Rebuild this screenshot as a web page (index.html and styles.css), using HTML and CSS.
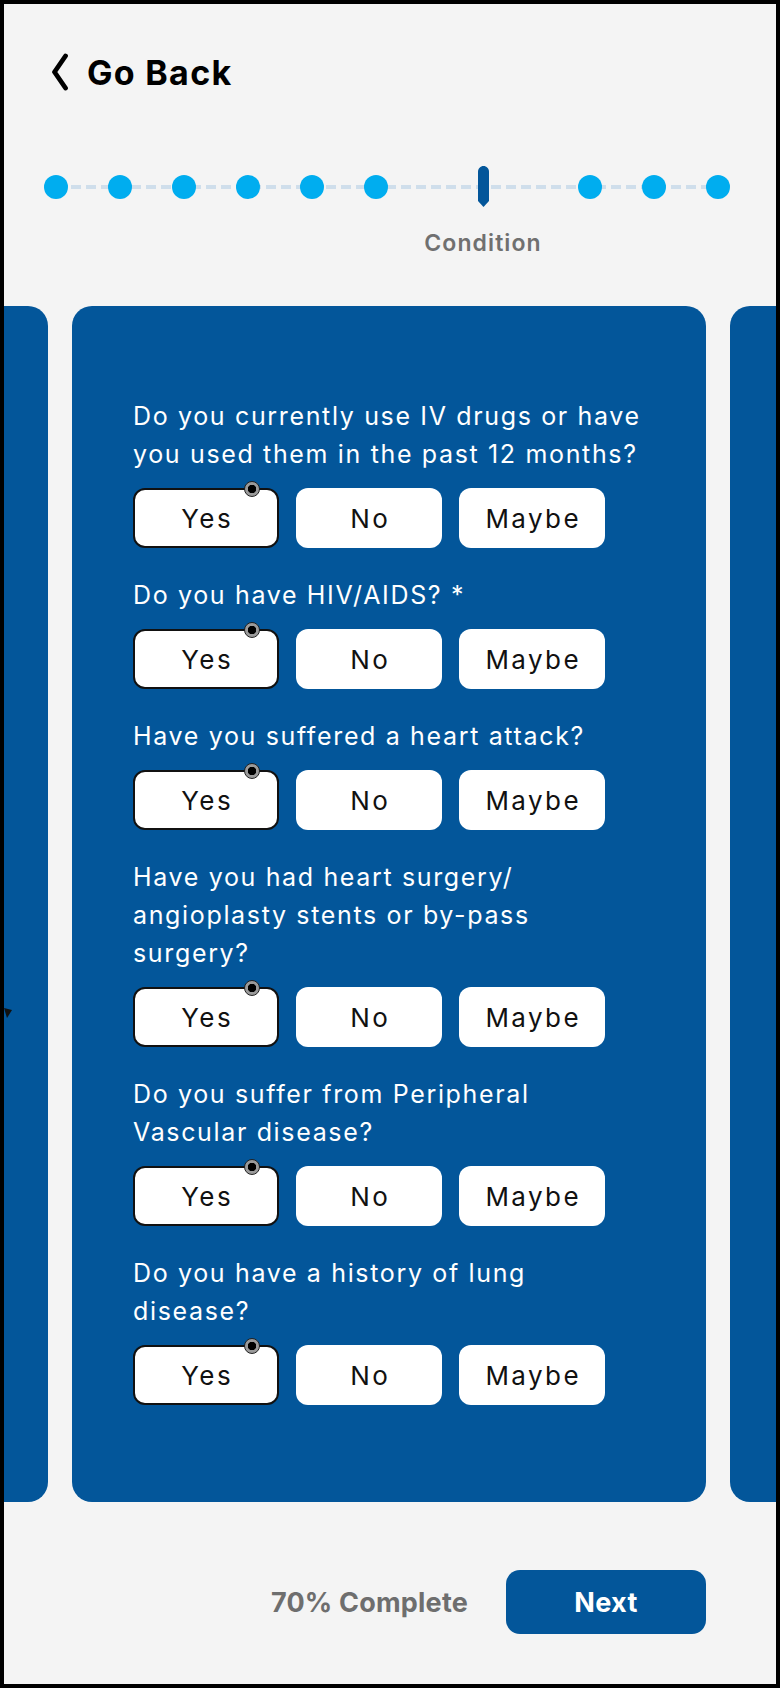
FILE: index.html
```html
<!DOCTYPE html>
<html lang="en">
<head>
<meta charset="utf-8">
<title>Condition</title>
<link rel="stylesheet" href="styles.css">
</head>
<body>
<div class="screen">
  <header class="header">
    <a class="back" href="#">
      <svg class="back-icon" width="20" height="38" viewBox="0 0 20 38"><path d="M15.5 3 L4.5 19 L15.5 35" fill="none" stroke="#000" stroke-width="4.8" stroke-linecap="round" stroke-linejoin="round"/></svg>
      <span>Go Back</span>
    </a>
  </header>

  <nav class="stepper">
    <span class="dot"></span>
    <span class="dot"></span>
    <span class="dot"></span>
    <span class="dot"></span>
    <span class="dot"></span>
    <span class="dot"></span>
    <span class="step-active">
      <svg class="marker" width="11" height="41" viewBox="0 0 11 41"><path d="M5.5 0 C8.5 0 11 2.5 11 5.5 L11 35 L5.5 41 L0 35 L0 5.5 C0 2.5 2.5 0 5.5 0 Z" fill="#03569a"/></svg>
      <span class="step-label">Condition</span>
    </span>
    <span class="dot"></span>
    <span class="dot"></span>
    <span class="dot"></span>
  </nav>

  <div class="carousel">
    <div class="track">
      <section class="card card-side">
        <svg class="side-mark" width="8" height="10" viewBox="0 0 8 10"><path d="M0 0 L8 2 L3 10 Z" fill="#111"/></svg>
      </section>
      <section class="card">
        <div class="q">
          <p class="q-text">Do you currently use IV drugs or have<br>you used them in the past 12 months?</p>
          <div class="options">
            <button class="opt opt-selected">Yes<span class="pin"></span></button>
            <button class="opt">No</button>
            <button class="opt">Maybe</button>
          </div>
        </div>
        <div class="q">
          <p class="q-text">Do you have HIV/AIDS? *</p>
          <div class="options">
            <button class="opt opt-selected">Yes<span class="pin"></span></button>
            <button class="opt">No</button>
            <button class="opt">Maybe</button>
          </div>
        </div>
        <div class="q">
          <p class="q-text">Have you suffered a heart attack?</p>
          <div class="options">
            <button class="opt opt-selected">Yes<span class="pin"></span></button>
            <button class="opt">No</button>
            <button class="opt">Maybe</button>
          </div>
        </div>
        <div class="q">
          <p class="q-text">Have you had heart surgery/<br>angioplasty stents or by-pass<br>surgery?</p>
          <div class="options">
            <button class="opt opt-selected">Yes<span class="pin"></span></button>
            <button class="opt">No</button>
            <button class="opt">Maybe</button>
          </div>
        </div>
        <div class="q">
          <p class="q-text">Do you suffer from Peripheral<br>Vascular disease?</p>
          <div class="options">
            <button class="opt opt-selected">Yes<span class="pin"></span></button>
            <button class="opt">No</button>
            <button class="opt">Maybe</button>
          </div>
        </div>
        <div class="q">
          <p class="q-text">Do you have a history of lung<br>disease?</p>
          <div class="options">
            <button class="opt opt-selected">Yes<span class="pin"></span></button>
            <button class="opt">No</button>
            <button class="opt">Maybe</button>
          </div>
        </div>
      </section>
      <section class="card card-side"></section>
    </div>
  </div>

  <footer class="footer">
    <span class="progress">70% Complete</span>
    <button class="next">Next</button>
  </footer>
</div>
</body>
</html>
```

FILE: styles.css
```css
* { box-sizing: border-box; }

html, body {
  margin: 0;
  padding: 0;
  background: #000;
}

.screen {
  width: 780px;
  height: 1688px;
  border: 4px solid #000;
  background: #f4f4f4;
  overflow: hidden;
  display: flex;
  flex-direction: column;
  font-family: "Inter", "Liberation Sans", sans-serif;
}

/* header */
.header {
  padding: 48px 0 0 46px;
  height: 92px;
}

.back {
  display: inline-flex;
  align-items: center;
  gap: 17px;
  height: 40px;
  color: #000;
  text-decoration: none;
  font-weight: 700;
  font-size: 34px;
  letter-spacing: 1.3px;
}

.back-icon { display: block; }

/* stepper */
.stepper {
  position: relative;
  display: flex;
  align-items: flex-start;
  gap: 40px;
  margin-top: 70px;
  padding-left: 40px;
  height: 140px;
}

.stepper::before {
  content: "";
  position: absolute;
  left: 52px;
  width: 662px;
  top: 18.5px;
  height: 4px;
  border-radius: 2px;
  background: repeating-linear-gradient(90deg, #cfdeeb 0 10px, transparent 10px 15px);
}

.dot {
  position: relative;
  flex: none;
  width: 24px;
  height: 24px;
  margin-top: 8.5px;
  border-radius: 50%;
  background: #00adef;
}

.step-active {
  position: relative;
  flex: none;
  width: 110px;
  display: flex;
  flex-direction: column;
  align-items: center;
}

.marker { display: block; }

.step-label {
  margin-top: 22px;
  white-space: nowrap;
  font-size: 23px;
  line-height: 28px;
  font-weight: 600;
  color: #707070;
  letter-spacing: 1.1px;
}

/* carousel */
.carousel {
  height: 1196px;
  flex: none;
}

.track {
  display: flex;
  gap: 24px;
  margin-left: -590px;
  height: 100%;
}

.card {
  position: relative;
  flex: none;
  width: 634px;
  height: 100%;
  border-radius: 20px;
  background: #03569a;
  padding: 91px 20px 0 61px;
}

.side-mark {
  position: absolute;
  left: 590px;
  top: 702px;
}

.q { margin-bottom: 28px; }

.q-text {
  margin: 0 0 15px;
  color: #fff;
  font-size: 25px;
  line-height: 38px;
  font-weight: 400;
  letter-spacing: 1.65px;
  white-space: nowrap;
}

.options {
  display: flex;
  gap: 17px;
}

.opt {
  position: relative;
  width: 146px;
  height: 60px;
  border: none;
  border-radius: 12px;
  background: #fff;
  color: #111;
  font-family: inherit;
  font-size: 26px;
  font-weight: 400;
  letter-spacing: 2.4px;
  padding: 0 0 0 2.4px;
}

.opt-selected {
  border: 2px solid #111;
}

.pin {
  position: absolute;
  top: -9px;
  right: 17px;
  width: 16px;
  height: 16px;
  border-radius: 50%;
  border: 1.5px solid #222;
  background: radial-gradient(circle, #000 0 4px, #9a9a9a 4.5px);
}

/* footer */
.footer {
  display: flex;
  justify-content: flex-end;
  align-items: center;
  gap: 38px;
  margin-top: 68px;
  padding-right: 70px;
}

.progress {
  font-size: 27px;
  font-weight: 700;
  color: #6e6e6e;
  letter-spacing: 0.2px;
}

.next {
  width: 200px;
  height: 64px;
  border: none;
  border-radius: 14px;
  background: #03569a;
  color: #fff;
  font-family: inherit;
  font-size: 27px;
  font-weight: 700;
  letter-spacing: 0.4px;
}
```
